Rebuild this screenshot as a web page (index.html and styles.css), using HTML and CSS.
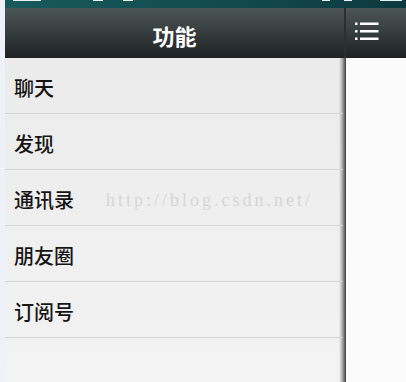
FILE: index.html
```html
<!DOCTYPE html>
<html lang="zh">
<head>
<meta charset="utf-8">
<title>功能</title>
<link rel="stylesheet" href="styles.css">
</head>
<body>
<div class="screen">
  <div class="statusbar">
    <span class="sb-bit sb-a"></span>
    <span class="sb-bit sb-b"></span>
    <span class="sb-bit sb-c"></span>
    <span class="sb-spacer"></span>
    <span class="sb-bit sb-d"></span>
    <span class="sb-bit sb-e"></span>
    <span class="sb-bit sb-f"></span>
  </div>
  <div class="main">
    <div class="drawer">
      <div class="bar drawer-bar"><span class="title">功能</span></div>
      <ul class="list">
        <li class="item">聊天</li>
        <li class="item">发现</li>
        <li class="item">通讯录<span class="watermark">http://blog.csdn.net/</span></li>
        <li class="item">朋友圈</li>
        <li class="item">订阅号</li>
      </ul>
    </div>
    <div class="content">
      <div class="bar content-bar">
        <svg class="menu-icon" width="24" height="20" viewBox="0 0 24 20" aria-hidden="true">
          <rect x="0" y="1.5" width="2.5" height="2.5" fill="#fff"/>
          <rect x="5" y="1.5" width="18.5" height="2.5" fill="#fff"/>
          <rect x="0" y="9" width="2.5" height="2.5" fill="#fff"/>
          <rect x="5" y="9" width="18.5" height="2.5" fill="#fff"/>
          <rect x="0" y="16.5" width="2.5" height="2.5" fill="#fff"/>
          <rect x="5" y="16.5" width="18.5" height="2.5" fill="#fff"/>
        </svg>
      </div>
      <div class="content-body"></div>
    </div>
  </div>
</div>
</body>
</html>
```
FILE: styles.css
```css
html, body {
  margin: 0;
  padding: 0;
}
body {
  width: 406px;
  height: 382px;
  overflow: hidden;
  background: #eef1f8;
  font-family: "Noto Sans CJK SC", "Noto Sans", sans-serif;
}
.screen {
  margin-left: 5px;
  height: 382px;
  display: flex;
  flex-direction: column;
}
.statusbar {
  height: 8px;
  flex: none;
  display: flex;
  align-items: flex-start;
  background: linear-gradient(to right, #185a5c, #124a4f 55%, #0d3940);
}
.sb-bit {
  height: 1px;
  background: #e8f0f0;
  margin-left: 6px;
}
.sb-a { width: 28px; margin-left: 8px; }
.sb-b { width: 10px; margin-left: 52px; }
.sb-c { width: 10px; margin-left: 20px; }
.sb-spacer { flex: 1; }
.sb-d { width: 8px; }
.sb-e { width: 8px; margin-left: 14px; }
.sb-f { width: 22px; margin-left: 28px; margin-right: 4px; }
.main {
  flex: 1;
  display: flex;
}
.bar {
  height: 50px;
  flex: none;
  display: flex;
  align-items: center;
  background: linear-gradient(to bottom, #4c5657, #353c3d 50%, #1e2223);
}
.drawer {
  width: 341px;
  display: flex;
  flex-direction: column;
}
.drawer-bar {
  justify-content: center;
  padding-right: 2px;
  box-shadow: inset -2px 0 0 #2a2f30;
}
.title {
  color: #ffffff;
  font-size: 22px;
  font-weight: bold;
  line-height: 1;
  margin-top: 3px;
}
.list {
  list-style: none;
  margin: 0;
  padding: 0;
  flex: 1;
  background:
    linear-gradient(to right, rgba(0,0,0,0) calc(100% - 7px), rgba(120,120,120,0.5) calc(100% - 4px), #3c3c3c 100%),
    linear-gradient(to bottom, #ebebeb, #f3f3f3);
}
.item {
  box-sizing: border-box;
  height: 56px;
  border-bottom: 1px solid #d5d5d5;
  display: flex;
  align-items: center;
  padding-left: 9px;
  padding-top: 3px;
  font-size: 20px;
  font-weight: 500;
  color: #151515;
  margin-right: 3px;
}
.watermark {
  font-family: "Liberation Serif", serif;
  font-size: 18px;
  font-weight: normal;
  letter-spacing: 3px;
  color: #d6d6d6;
  margin-left: 32px;
  margin-top: 2px;
}
.content {
  flex: 1;
  display: flex;
  flex-direction: column;
}
.content-bar {
  padding-left: 9px;
}
.menu-icon {
  display: block;
  margin-top: -4px;
}
.content-body {
  flex: 1;
  background: #fbfbfb;
}
```
